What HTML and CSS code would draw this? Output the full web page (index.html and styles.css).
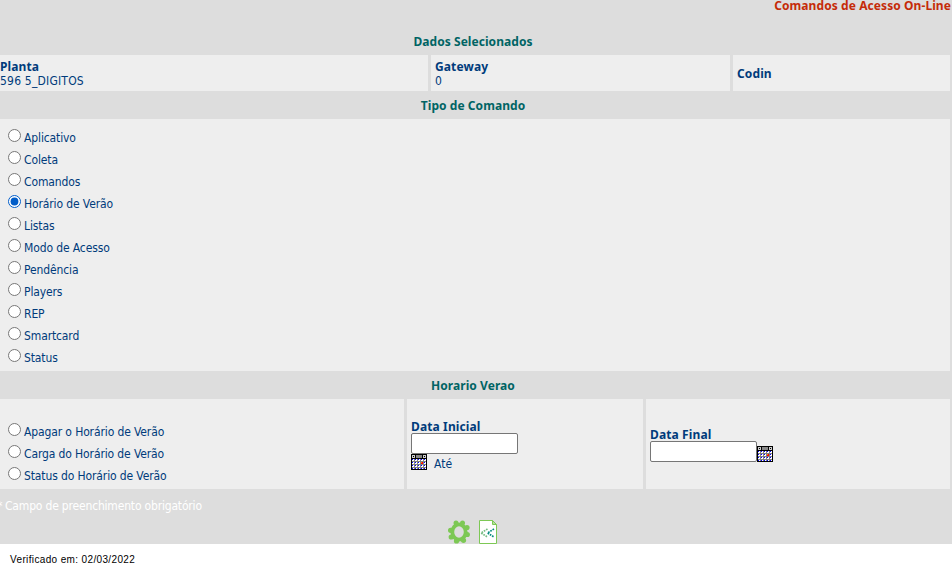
FILE: index.html
```html
<!DOCTYPE html>
<html lang="pt-BR">
<head>
<meta charset="utf-8">
<title>Comandos de Acesso On-Line</title>
<link rel="stylesheet" href="styles.css">
</head>
<body>
<svg class="defs" width="0" height="0">
  <defs>
    <symbol id="calendar" viewBox="0 0 16 16">
      <g shape-rendering="crispEdges">
      <path d="M0 0h16v16H0z"/>
      <path fill="#ccc" d="M1 1h3v3H1zM12 1h3v3h-3z"/>
      <path fill="#888" d="M5 1h6v3H5z"/>
      <path d="M2 2h1v1H2zM13 2h1v1h-1z"/>
      <path fill="#fff" d="M1 5h14v10H1z"/>
      <path stroke="#808080" d="M3.500 5v10M6.500 5v10M9.500 5v10M12.500 5v10M1 7.500h14M1 10.500h14M1 13.500h14"/>
      <path stroke="#00f" stroke-dasharray="1 2" d="M1 5.500h14M1 8.500h14M1 11.500h14M1 14.500h14"/>
      <path fill="red" d="M11 8h1v2h-2V9h1z"/>
      <path fill="#f80" d="M10 8h1v1h-1z"/>
      </g>
    </symbol>
  </defs>
</svg>
<main class="page">
  <h1 class="title">Comandos de Acesso On-Line</h1>
  <h2 class="heading heading-data">Dados Selecionados</h2>
  <div class="row row-data">
    <div class="cell"><b class="planta">Planta</b><span class="value">596 5_DIGITOS</span></div>
    <div class="cell inset"><b class="gateway">Gateway</b><span>0</span></div>
    <div class="cell inset"><b>Codin</b></div>
  </div>
  <h2 class="heading heading-type">Tipo de Comando</h2>
  <div class="cell options">
    <label><input type="radio" name="tipo"><span>Aplicativo</span></label>
    <label><input type="radio" name="tipo"><span>Coleta</span></label>
    <label><input type="radio" name="tipo"><span>Comandos</span></label>
    <label><input type="radio" name="tipo" checked><span>Horário de Verão</span></label>
    <label><input type="radio" name="tipo"><span>Listas</span></label>
    <label><input type="radio" name="tipo"><span>Modo de Acesso</span></label>
    <label><input type="radio" name="tipo"><span>Pendência</span></label>
    <label><input type="radio" name="tipo"><span>Players</span></label>
    <label><input type="radio" name="tipo"><span>REP</span></label>
    <label><input type="radio" name="tipo"><span>Smartcard</span></label>
    <label><input type="radio" name="tipo"><span>Status</span></label>
  </div>
  <h2 class="heading heading-dst">Horario Verao</h2>
  <div class="row row-dst">
    <div class="cell options actions">
      <label><input type="radio" name="acao"><span>Apagar o Horário de Verão</span></label>
      <label><input type="radio" name="acao"><span>Carga do Horário de Verão</span></label>
      <label><input type="radio" name="acao"><span>Status do Horário de Verão</span></label>
    </div>
    <div class="cell inset">
      <b class="date-start">Data Inicial</b>
      <input class="date" type="text">
      <div class="until"><svg class="cal" width="16" height="16"><use href="#calendar"/></svg><span>Até</span></div>
    </div>
    <div class="cell inset">
      <b class="date-end">Data Final</b>
      <div class="end"><input class="date" type="text"><svg class="cal" width="16" height="16"><use href="#calendar"/></svg></div>
    </div>
  </div>
  <p class="note"><span class="star">*</span><span>Campo de preenchimento obrigatório</span></p>
  <div class="tools">
    <svg width="22" height="25" viewBox="0 0 22 25">
      <g fill="#7dc855">
        <path fill-rule="evenodd" d="M11 3.500a8.600 9.500 0 1 1 0 19a8.600 9.500 0 1 1 0-19zM11 7.300a4.800 5.700 0 1 0 0 11.400a4.800 5.700 0 1 0 0-11.400z"/>
        <circle cx="8" cy="3.900" r="2.500"/>
        <circle cx="14.500" cy="3.900" r="2.500"/>
        <circle cx="19" cy="8.500" r="2.600"/>
        <circle cx="19.300" cy="15.500" r="2.600"/>
        <circle cx="15.500" cy="21.300" r="2.600"/>
        <circle cx="8.500" cy="22" r="2.600"/>
        <circle cx="3.200" cy="18" r="2.600"/>
        <circle cx="2.600" cy="11.300" r="2.600"/>
      </g>
    </svg>
    <svg width="20" height="26" viewBox="0 0 20 26">
      <path fill="#fff" stroke="#7dc855" d="M1.500 1.500h13l4 4v19h-17z"/>
      <path fill="#b5df9d" stroke="#7dc855" d="M14.500 1.500v4h4z"/>
      <g fill="none" stroke-width="1.700" stroke-dasharray="1.700 .9">
        <path stroke="#78bd83" d="M9.500 10L3 14l6.500 4"/>
        <path stroke="#078c80" d="M16 10L9.500 14l6.500 4"/>
      </g>
    </svg>
  </div>
</main>
<footer class="checked">Verificado em: 02/03/2022</footer>
</body>
</html>
```
FILE: styles.css
```css
* { box-sizing: border-box; }

body {
  margin: 0;
  height: 574px;
  overflow: hidden;
  background: #fff;
  color: #003b7b;
  font: 12px/14px Tahoma, "DejaVu Sans Condensed", "Noto Sans", sans-serif;
}

.defs { position: absolute; }

.page {
  display: flex;
  flex-direction: column;
  height: 544px;
  background: #ddd;
}

.title {
  margin: 0;
  height: 28px;
  padding-right: 1px;
  color: #c52b08;
  font: bold 12px/12px "Noto Sans", sans-serif;
  letter-spacing: .08px;
  text-align: right;
}

.heading {
  margin: 0;
  height: 28px;
  padding-right: 6px;
  color: #006464;
  font: bold 12px/29px "Noto Sans", sans-serif;
  letter-spacing: .06px;
  text-align: center;
}

.heading-data { height: 27px; line-height: 27px; }

b {
  height: 14px;
  font: bold 12px/16px "Noto Sans", sans-serif;
  letter-spacing: .12px;
}

.row {
  display: grid;
  gap: 3px;
  width: 950px;
}

.row-data { height: 36px; grid-template-columns: 428px 299px 217px; }
.row-data span { line-height: 16px; height: 14px; }
.value { letter-spacing: .2px; }
.row-dst { height: 90px; grid-template-columns: 404px 236px 304px; }

.cell {
  display: flex;
  flex-direction: column;
  justify-content: center;
  width: 100%;
  background: #eee;
}

.inset { padding-left: 4px; }

.options {
  width: 950px;
  height: 252px;
  padding-left: 8px;
  justify-content: flex-start;
  padding-top: 7px;
}

.row .options { width: auto; height: auto; padding-top: 21px; }

label { display: flex; height: 22px; }
label span { padding-top: 5px; letter-spacing: -.12px; }
input[type="radio"] { width: 13px; height: 13px; margin: 3px 3px 0 0; accent-color: #005cc8; }

.date {
  width: 107px;
  height: 21px;
  margin: 0;
  padding: 1px 2px;
  border: 1px solid #767676;
  border-radius: 2px;
  background: #fff;
}

.until { display: flex; gap: 7px; height: 16px; }
.until span { line-height: 21px; }
.cal { display: block; flex: none; }
.end { display: flex; align-items: flex-end; }

.note {
  display: flex;
  margin: 0;
  height: 30px;
  padding-top: 10px;
  color: #fff;
  letter-spacing: -.18px;
}

.star { width: 5px; margin-left: -3px; margin-right: 3px; }

.tools {
  display: flex;
  gap: 8px;
  height: 25px;
  padding-left: 448px;
}

.checked {
  padding: 9px 0 0 10px;
  color: #000;
  font: 10px/13px "Liberation Sans", Arial, sans-serif;
  letter-spacing: .36px;
}
```
